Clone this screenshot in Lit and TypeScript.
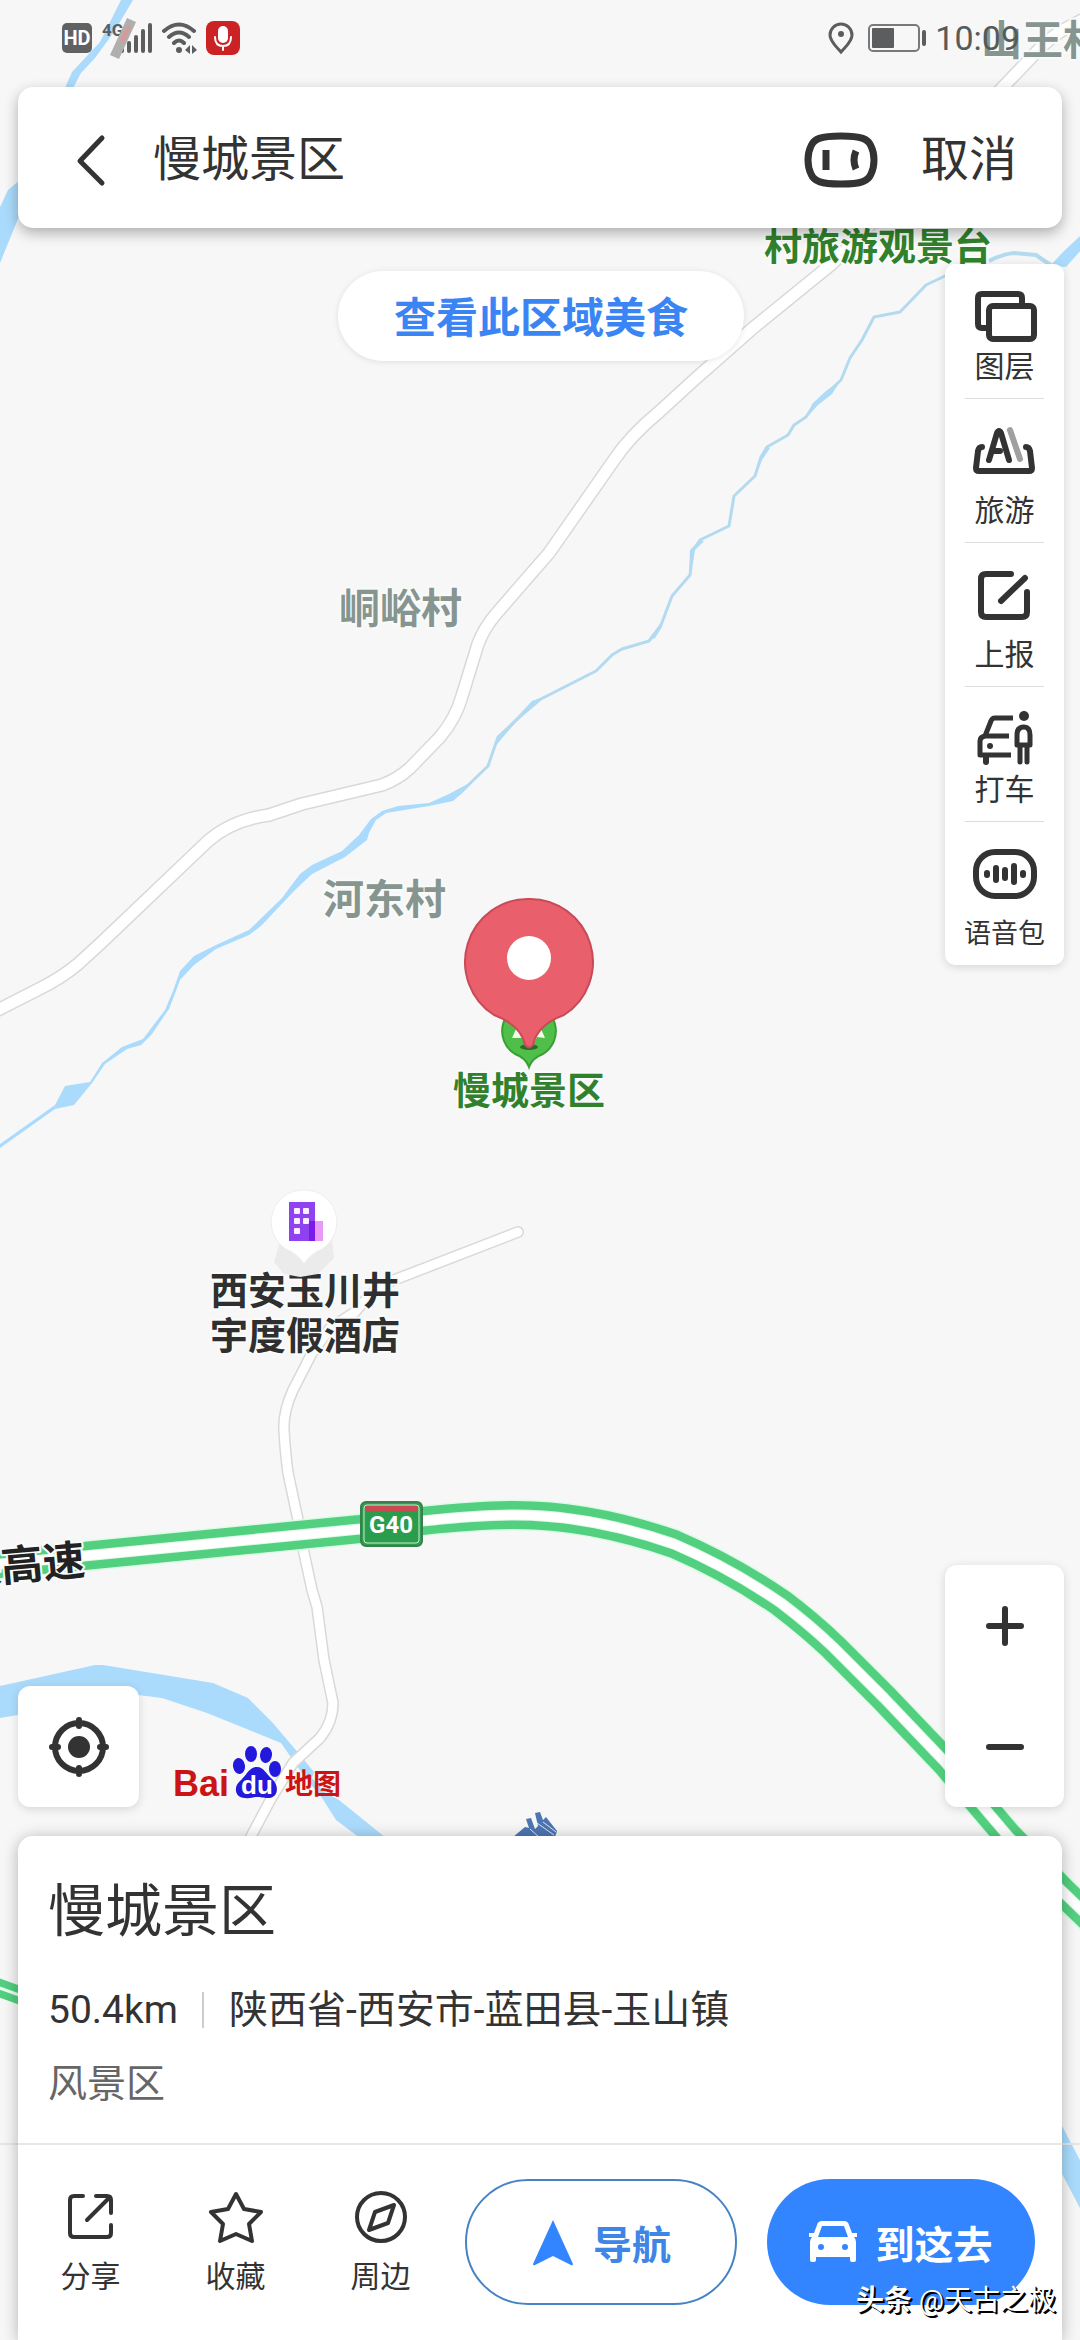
import { LitElement, html, css, svg } from "lit";
import { customElement, state } from "lit/decorators.js";
import { classMap } from "lit/directives/class-map.js";

const roadMain =
  "M-10 1014 L37 990 Q60 979 78 964 L102 942 L208 841 Q232 820 269 815 L302 804 L382 785 Q398 779 410 768 L440 737 Q456 718 462 696 L478 644 Q484 628 496 614 L549 553 L614 460 Q630 436 659 412 L694 380 L753 328 L833 263 L1003 87 L1029 60 Q1050 36 1067 28 L1090 16";
const roadSide =
  "M518 1232 L394 1280 Q376 1286 355 1312 L330 1328 L312 1353 L293 1390 Q283 1412 284 1430 Q285 1450 288 1473 L298 1520 L304 1553 L312 1590 L317 1607 L324 1660 L333 1703 Q333 1722 320 1738 L293 1763 L272 1797 L248 1842";
const highway =
  "M-10 1565 L84 1556 L360 1529 L422 1521 Q480 1515 515 1515 Q590 1515 674 1544 Q730 1568 781 1603 Q810 1625 833 1647 L884 1698 L945 1762 L1008 1836 L1062 1891 L1090 1918";

const map = svg`
  <g fill="#abdbfc">
    <path d="M121 0 L108 26 L100 42 L72 72 L65 88 L73 88 L81 73 L95 58 L114 32 L133 0Z"/>
    <path d="M20 180 L8 190 L0 207 L0 263 L20 214Z"/>
    <path d="M1082 234 L1063 252 L1050 266 L1066 267 L1082 249Z"/>
    <path d="M475 780 L449 794 L429 803 L398 806 L382 811 L371 819 L359 835 L342 851 L312 865 L300 874 L282 898 L249 930 L216 945 L194 956 L180 971 L173 991 L165 1010 L143 1039 L122 1047 L102 1063 L90 1082 L65 1086 L55 1105 L0 1144 L0 1148 L55 1109 L74 1105 L92 1083 L105 1064 L127 1049 L141 1045 L152 1034 L169 1009 L176 991 L180 980 L194 965 L216 949 L249 935 L261 926 L294 891 L312 874 L345 857 L367 840 L369 833 L376 820 L386 813 L429 806 L453 801 L461 794Z"/>
    <path d="M0 1686 L95 1665 L103 1665 L213 1683 L248 1698 L272 1722 L300 1755 L314 1772 L312 1778 L324 1792 L339 1800 L386 1838 L360 1838 L336 1820 L322 1798 L304 1776 L281 1743 L207 1713 L162 1698 L138 1695 L0 1718Z"/>
    <path d="M1060 2122 L1082 2164 L1082 2212 L1060 2170Z"/>
    <path d="M841 380 L826 391 L812 404 L808 416 L818 405 L832 394Z"/>
    <path d="M766 447 L760 457 L758 470 L762 460 L770 448Z"/>
    <path d="M700 540 L690 550 L689 574 L693 562 L695 550 L704 541Z"/>
    <path d="M661 625 L648 641 L655 638 L662 627Z"/>
    <path d="M546 696 L532 701 L516 718 L497 737 L494 748 L503 737 L518 720 L536 705Z"/>
  </g>
  <g fill="none" stroke="#b4daf0" stroke-linejoin="round">
    <path stroke-width="3" d="M947 275 L926 285 L900 312 L874 317 L862 340 L850 358 L841 380 L814 405 L806 417 L794 425 L788 435 L767 447 L761 457 L755 476 L734 496 L729 526 L700 540 L693 550 L690 575 L672 596 L661 625 L649 641 L622 649 L612 655 L596 671 L537 701 L498 737 L488 766 L459 794"/>
    <path stroke-width="4" d="M989 261 Q1002 254 1014 253 L1036 255 L1052 266"/>
  </g>
  <g fill="none" stroke-linejoin="round" stroke-linecap="round">
    <path d=${roadMain} stroke="#d9d9d9" stroke-width="14"/>
    <path d=${roadMain} stroke="#fff" stroke-width="11"/>
    <path d=${roadSide} stroke="#d9d9d9" stroke-width="12"/>
    <path d=${roadSide} stroke="#fff" stroke-width="9"/>
    <path d=${highway} stroke="#dcfbe6" stroke-width="31"/>
    <path d=${highway} stroke="#52d07f" stroke-width="28"/>
    <path d=${highway} stroke="#dcfbe6" stroke-width="11"/>
    <path d=${highway} stroke="#fff" stroke-width="9"/>
    <path d="M-6 1986 L30 1999" stroke="#52d07f" stroke-width="18"/>
    <path d="M-6 1986 L30 1999" stroke="#eafff0" stroke-width="3"/>
    <path d="M0 2144 H1080" stroke="#e4e6e7" stroke-width="2"/>
  </g>
  <g fill="#4d76b2">
    <path d="M513 1837 L525 1827 L529 1828 L526 1819 L531 1818 L535 1829 L538 1826 L535 1813 L540 1812 L543 1820 L546 1817 L557 1831 L555 1837Z"/>
    <path d="M537 1823 L554 1835 M530 1829 L539 1837 M543 1822 L556 1832" stroke="#dfe8f4" stroke-width="1"/>
  </g>

  <g class="label village">
    <text x="981" y="55">山王村</text>
    <text x="339" y="623">峒峪村</text>
    <text x="323" y="914">河东村</text>
  </g>
  <g class="label scenic">
    <text x="764" y="260">村旅游观景台</text>
    <text x="529" y="1104" text-anchor="middle">慢城景区</text>
  </g>
  <g class="label hotel" text-anchor="middle">
    <text x="305" y="1304">西安玉川井</text>
    <text x="305" y="1349">宇度假酒店</text>
  </g>
  <text class="label highway" x="-40" y="1582" transform="rotate(-5 0 1578)">陕高速</text>

  <path fill="#ebebeb" d="M280 1242 L274 1262 L284 1274 L300 1277 L318 1274 L334 1258 L332 1240Z"/>
  <path fill="#fff" stroke="#eeeeee" d="M304 1190 A32 32 0 0 1 322 1249 Q310 1254 304 1264 Q298 1254 286 1249 A32 32 0 0 1 304 1190Z"/>
  <rect x="314" y="1221" width="9" height="20" fill="#e79af7"/>
  <rect x="289" y="1202" width="26" height="39" fill="#8f42ef"/>
  <rect x="309" y="1221" width="6" height="20" fill="#7a1ce8"/>
  <g fill="#fdf0ff">
    <rect x="294" y="1208" width="6" height="6" rx="1"/><rect x="303" y="1208" width="6" height="6" rx="1"/>
    <rect x="294" y="1218" width="6" height="6" rx="1"/><rect x="303" y="1218" width="6" height="6" rx="1"/>
    <rect x="294" y="1228" width="6" height="6" rx="1"/>
  </g>

  <path fill="#50bf49" stroke="#36a033" stroke-width="2" d="M529 1004 A27 27 0 0 1 543 1054 Q532 1058 529 1067 Q526 1058 515 1054 A27 27 0 0 1 529 1004Z"/>
  <path fill="#f1fbe9" d="M516 1029 L512 1038 H522 L524 1043 H534 L537 1037 L545 1038 L541 1029Z"/>
  <ellipse cx="529" cy="1047" rx="9" ry="3" fill="#2d6a2b"/>
  <path fill="#ea5f6c" stroke="#c94a57" stroke-width="2" d="M529 899 A63 63 0 0 1 564 1015 Q537 1025 533 1045 Q529 1050 525 1045 Q521 1025 494 1015 A63 63 0 0 1 529 899Z"/>
  <circle cx="529" cy="958" r="22" fill="#fff"/>

  <rect x="361" y="1502" width="61" height="44" rx="5" fill="#2f9e4f" stroke="#3a7f50" stroke-width="2"/>
  <rect x="364" y="1505" width="55" height="38" rx="3" fill="#2a9d4c" stroke="#c9f0d2" stroke-width="1"/>
  <rect x="365" y="1506" width="53" height="5" fill="#c94a50"/>
  <text class="shield" x="391" y="1533" text-anchor="middle">G40</text>
`;

const toolIcons = {
  layers: svg`<path stroke-width="6" d="M13 40 H9 Q5 40 5 36 V10 Q5 6 9 6 H45 Q49 6 49 10 V16"/><rect stroke-width="6" x="16" y="18" width="45" height="33" rx="4"/>`,
  travel: svg`<path stroke-width="6" d="M9 24 Q6 24 5 28 L3 45 Q3 48 6 48 H56 Q59 48 59 45 L57 28 Q56 24 53 24"/><path stroke-width="6" d="M16 37 L24 10 Q26 6 28 10 L36 37 M20 28 H27"/><path stroke="#a0a0a0" stroke-width="6" d="M37 7 L47 36"/>`,
  report: svg`<path stroke-width="6" d="M38 7 H13 Q8 7 8 12 V45 Q8 50 13 50 H49 Q54 50 54 45 V25 M28 34 L52 11"/>`,
  taxi: svg`<path stroke-linecap="butt" d="M40 7 H22 Q19 7 18 10 L12 25 Q7 26 7 30 V44 H38 M12 25 H36"/><path stroke-width="6" d="M13 46 V51"/><circle cx="17" cy="35" r="3" fill="#333" stroke="none"/><circle cx="51" cy="5" r="5" fill="#333" stroke="none"/><path d="M44 34 V24 Q44 16 51 16 Q57 16 57 24 V34 M47 34 V51 M54 34 V51 M45 34 H56"/>`,
  voice: svg`<rect stroke-width="6" x="3" y="6" width="58" height="44" rx="19"/><path stroke-width="6" d="M14 27 V29 M23 22 V34 M32 24 V32 M41 20 V36 M50 27 V29"/>`,
};

type ToolKey = keyof typeof toolIcons;
const tools: { icon: ToolKey; label: string; tight?: boolean; small?: boolean }[] = [
  { icon: "layers", label: "图层", tight: true },
  { icon: "travel", label: "旅游" },
  { icon: "report", label: "上报" },
  { icon: "taxi", label: "打车", tight: true },
  { icon: "voice", label: "语音包", small: true },
];

const actions = [
  {
    label: "分享",
    icon: svg`<path d="M20 7 H11 Q7 7 7 11 V44 Q7 48 11 48 H44 Q48 48 48 44 V36 M33 7 H44 Q48 7 48 11 V24 M46 9 L24 31"/>`,
  },
  {
    label: "收藏",
    icon: svg`<path d="M28 5 L36 20 L53 23 L41 35 L44 52 L28 45 L12 52 L15 35 L3 23 L20 20Z"/>`,
  },
  {
    label: "周边",
    icon: svg`<circle cx="28" cy="28" r="24"/><path d="M41 16 L35 34 L16 41 L22 23Z"/>`,
  },
];

@customElement("app-root")
export class AppRoot extends LitElement {
  @state() private query = "慢城景区";

  static styles = css`
    :host {
      display: block;
      font-family: Roboto, "Noto Sans CJK SC", sans-serif;
      color: #333;
    }
    * {
      box-sizing: border-box;
    }
    svg {
      display: block;
      flex: none;
    }
    button,
    input {
      font: inherit;
      color: inherit;
      border: 0;
      padding: 0;
      margin: 0;
      background: none;
    }
    button {
      cursor: pointer;
    }
    .screen {
      position: relative;
      display: flex;
      flex-direction: column;
      min-height: 100vh;
      overflow: hidden;
      background: #f7f7f7;
    }
    .map {
      position: absolute;
      inset: 0;
      width: 100%;
      height: 100%;
    }
    .label {
      font-family: "Noto Sans CJK SC", sans-serif;
      font-weight: 700;
      stroke: #f9fbfa;
      stroke-width: 4px;
      stroke-linejoin: round;
      paint-order: stroke;
    }
    .village {
      font-size: 41px;
      fill: #86958f;
    }
    .scenic {
      font-size: 38px;
      fill: #31812c;
    }
    .hotel {
      font-size: 38px;
      fill: #2f2f2f;
    }
    .highway {
      font-size: 42px;
      fill: #222;
    }
    .shield {
      font-size: 24px;
      font-weight: 700;
      fill: #fff;
    }
    .status {
      position: relative;
      display: flex;
      align-items: center;
      gap: 9px;
      height: 87px;
      padding: 0 60px 11px 62px;
      color: #5b5d5e;
    }
    .status .push {
      margin-left: auto;
    }
    .status .battery {
      margin-left: 5px;
    }
    .time {
      font-size: 34px;
      line-height: 40px;
      color: #555a5b;
    }
    .hd {
      font: 700 20px Roboto, sans-serif;
      fill: #fff;
    }
    .net {
      font: 700 17px Roboto, sans-serif;
      fill: #5b5d5e;
    }
    .search {
      position: relative;
      display: flex;
      align-items: center;
      height: 141px;
      margin: 0 18px;
      padding: 4px 45px 0 42px;
      background: #fff;
      border-radius: 15px;
      box-shadow: 0 5px 14px rgba(0, 0, 0, 0.3);
      font-size: 48px;
    }
    .field {
      flex: 1;
      min-width: 0;
      margin: 0 33px;
      outline: none;
      line-height: 64px;
    }
    .cancel {
      margin-left: 43px;
      line-height: 64px;
    }
    .stage {
      position: relative;
      flex: 1;
      display: grid;
      grid-template-columns: 121px 1fr 119px;
      grid-template-rows: auto 1fr auto;
      padding: 36px 16px 29px 18px;
    }
    .pill {
      grid-area: 1 / 1 / 2 / 4;
      place-self: start center;
      height: 90px;
      margin-top: 7px;
      padding: 0 56px 4px;
      border-radius: 45px;
      background: #fff;
      color: #3a85f3;
      font-size: 42px;
      font-weight: 700;
      box-shadow: 0 1px 6px rgba(0, 0, 0, 0.1);
    }
    .tools {
      grid-area: 1 / 3 / 3 / 4;
      align-self: start;
      list-style: none;
      margin: 0;
      padding: 0 20px;
      border-radius: 10px;
      background: #fff;
      box-shadow: 0 2px 10px rgba(0, 0, 0, 0.14);
    }
    .tool + .tool {
      border-top: 1px solid #dcdcdc;
    }
    .tool button {
      display: flex;
      flex-direction: column;
      align-items: center;
      gap: 16px;
      width: 100%;
      padding: 24px 0 15px;
      font-size: 30px;
      line-height: 32px;
      white-space: nowrap;
    }
    .tool.tight button {
      gap: 7px;
    }
    .tool.small button {
      font-size: 27px;
    }
    .locate {
      grid-area: 3 / 1 / 4 / 2;
      align-self: end;
      display: grid;
      place-items: center;
      height: 121px;
      border-radius: 12px;
      background: #fff;
      box-shadow: 0 2px 10px rgba(0, 0, 0, 0.14);
    }
    .brand {
      grid-area: 3 / 2 / 4 / 3;
      align-self: end;
      display: flex;
      align-items: flex-end;
      gap: 3px;
      margin-left: 34px;
      padding-bottom: 8px;
      color: #cc1414;
      font-weight: 700;
    }
    .bai {
      font-family: "Liberation Sans", sans-serif;
      font-size: 36px;
      line-height: 30px;
    }
    .ditu {
      font-size: 28px;
      line-height: 28px;
    }
    .du {
      font: 700 26px "Liberation Sans", sans-serif;
      fill: #fff;
    }
    .zoom {
      grid-area: 3 / 3 / 4 / 4;
      display: flex;
      flex-direction: column;
      border-radius: 12px;
      background: #fff;
      box-shadow: 0 2px 10px rgba(0, 0, 0, 0.14);
    }
    .zoom button {
      display: grid;
      place-items: center;
      height: 121px;
    }
    .place {
      position: relative;
      margin: 0 18px;
      background: #fff;
      border-radius: 15px 15px 0 0;
      box-shadow: 0 2px 16px rgba(0, 0, 0, 0.28);
    }
    .info {
      display: flex;
      flex-direction: column;
      padding: 48px 30px 36px;
      border-bottom: 2px solid #e8e8e8;
      font-size: 39px;
      line-height: 46px;
    }
    .title {
      margin: 0 0 47px;
      font-size: 57px;
      font-weight: 400;
      line-height: 56px;
    }
    .meta {
      display: flex;
      align-items: center;
      margin-bottom: 28px;
    }
    .address {
      margin-left: 24px;
      padding-left: 25px;
      border-left: 2px solid #ccc;
      line-height: 36px;
    }
    .kind {
      color: #666;
    }
    .bar {
      display: flex;
      align-items: center;
      padding: 34px 27px 35px 0;
    }
    .action {
      display: flex;
      flex-direction: column;
      align-items: center;
      gap: 14px;
      width: 145px;
      font-size: 30px;
      line-height: 36px;
    }
    .cta {
      flex: 1;
      display: flex;
      align-items: center;
      justify-content: center;
      gap: 18px;
      height: 126px;
      border-radius: 63px;
      font-size: 39px;
      font-weight: 700;
      white-space: nowrap;
    }
    .nav {
      margin: 0 30px 0 12px;
      border: 2px solid #4583c4;
      color: #3f85e6;
    }
    .go {
      background: #3385ff;
      color: #fff;
    }
    .watermark {
      position: absolute;
      right: 24px;
      bottom: 21px;
      font-size: 28px;
      line-height: 36px;
      color: #fff;
      text-shadow: 2px 2px 0 #000, 1px 1px 0 #000;
    }
  `;

  private onInput(e: Event) {
    this.query = (e.target as HTMLInputElement).value;
  }

  private renderStatus() {
    return html`
      <div class="status">
        <svg width="30" height="30" viewBox="0 0 30 30">
          <rect width="30" height="30" rx="5" fill="#5f6163" />
          <text class="hd" x="15" y="22" text-anchor="middle">HD</text>
        </svg>
        <svg width="51" height="42" viewBox="0 0 51 42">
          <text class="net" x="1" y="19">4G</text>
          <g fill="#5b5d5e">
            <rect x="19" y="30" width="4" height="6" rx="2" /><rect x="26" y="24" width="4" height="12" rx="2" />
            <rect x="33" y="18" width="4" height="18" rx="2" /><rect x="40" y="12" width="4" height="24" rx="2" />
            <rect x="47" y="6" width="4" height="30" rx="2" />
          </g>
          <path d="M26 1 L35 5 L18 42 L9 38Z" fill="#b0aeae" />
          <path d="M26 9 L30 10 L22 27 L19 24Z" fill="#d69a98" />
        </svg>
        <svg width="36" height="32" viewBox="0 0 36 32" fill="none" stroke="#5b5d5e" stroke-width="4" stroke-linecap="round">
          <path d="M3 9 Q18 -4 33 9 M8 15 Q18 6 28 15 M13 21 Q18 16 23 21" />
          <circle cx="18" cy="28" r="3" fill="#5b5d5e" stroke="none" />
          <path d="M29 23 V32 L24 28Z M31 23 V32 L36 28Z" fill="#5b5d5e" stroke="none" />
        </svg>
        <svg width="34" height="34" viewBox="0 0 34 34">
          <rect width="34" height="34" rx="8" fill="#cb2226" />
          <rect x="12" y="5" width="10" height="17" rx="5" fill="#fff" />
          <path d="M9 16 Q9 25 17 25 Q25 25 25 16 M17 25 V29" fill="none" stroke="#fff" stroke-width="2" stroke-linecap="round" />
        </svg>
        <svg class="push" width="26" height="32" viewBox="0 0 26 32">
          <path d="M13 2 A11 11 0 0 1 24 13 C24 20 17 25 13 30 C9 25 2 20 2 13 A11 11 0 0 1 13 2Z" fill="none" stroke="#5b5d5e" stroke-width="3" />
          <circle cx="13" cy="12" r="3" fill="#5b5d5e" />
        </svg>
        <svg class="battery" width="58" height="28" viewBox="0 0 58 28">
          <rect x="1" y="1" width="50" height="26" rx="4" fill="none" stroke="#77797a" stroke-width="2" />
          <rect x="4" y="4" width="22" height="20" rx="1" fill="#5b5d5e" />
          <rect x="54" y="6" width="4" height="16" rx="2" fill="#5b5d5e" />
        </svg>
        <span class="time">10:09</span>
      </div>
    `;
  }

  render() {
    return html`
      <main class="screen">
        <svg class="map" viewBox="0 0 1080 2340" preserveAspectRatio="xMidYMid slice">${map}</svg>

        ${this.renderStatus()}

        <header class="search">
          <button aria-label="返回">
            <svg width="60" height="60" viewBox="0 0 60 60" fill="none" stroke="#333" stroke-width="5" stroke-linecap="round" stroke-linejoin="round">
              <path d="M42 8 L20 31 L42 53" />
            </svg>
          </button>
          <input class="field" type="text" aria-label="搜索" .value=${this.query} @input=${this.onInput} />
          <button aria-label="语音助手">
            <svg width="74" height="56" viewBox="0 0 74 56" fill="none" stroke="#333">
              <path stroke-width="7" d="M37 4 C58 4 64 7 67 14 Q70 20 70 28 Q70 36 67 42 C64 49 58 52 37 52 C16 52 10 49 7 42 Q4 36 4 28 Q4 20 7 14 C10 7 16 4 37 4Z" />
              <path stroke-width="7" d="M22 18 V38" />
              <path stroke-width="7" d="M52 19 Q48 28 52 37" />
            </svg>
          </button>
          <button class="cancel">取消</button>
        </header>

        <section class="stage">
          <button class="pill">查看此区域美食</button>
          <ul class="tools">
            ${tools.map(
              (t) => html`
                <li class=${classMap({ tool: true, tight: !!t.tight, small: !!t.small })}>
                  <button>
                    <svg width="64" height="56" viewBox="0 0 64 56" overflow="visible" fill="none" stroke="#333" stroke-width="5" stroke-linecap="round" stroke-linejoin="round">
                      ${toolIcons[t.icon]}
                    </svg>
                    ${t.label}
                  </button>
                </li>
              `
            )}
          </ul>
          <button class="locate" aria-label="定位">
            <svg width="62" height="62" viewBox="0 0 62 62" fill="none" stroke="#333" stroke-width="6" stroke-linecap="round">
              <circle cx="31" cy="31" r="24" />
              <circle cx="31" cy="31" r="11" fill="#333" stroke="none" />
              <path d="M31 4 V10 M31 52 V58 M4 31 H10 M52 31 H58" />
            </svg>
          </button>
          <div class="brand">
            <span class="bai">Bai</span>
            <svg width="50" height="54" viewBox="0 0 50 54">
              <g fill="#2319dc">
                <ellipse cx="19" cy="9" rx="6" ry="8" /><ellipse cx="34" cy="10" rx="6" ry="8" transform="rotate(8 34 10)" />
                <ellipse cx="7" cy="21" rx="6" ry="8" transform="rotate(-8 7 21)" /><ellipse cx="43" cy="24" rx="6" ry="8" />
                <path d="M25 22 C32 22 34 29 40 34 C48 41 46 53 36 53 C31 53 29 52 25 52 C21 52 18 54 13 53 C3 53 1 42 8 36 C15 30 17 22 25 22Z" />
              </g>
              <text class="du" x="25" y="49" text-anchor="middle">du</text>
            </svg>
            <span class="ditu">地图</span>
          </div>
          <div class="zoom">
            <button aria-label="放大">
              <svg width="40" height="40" viewBox="0 0 40 40" stroke="#333" stroke-width="6" stroke-linecap="round"><path d="M20 3 V37 M4 20 H36" /></svg>
            </button>
            <button aria-label="缩小">
              <svg width="40" height="40" viewBox="0 0 40 40" stroke="#333" stroke-width="6" stroke-linecap="round"><path d="M4 20 H36" /></svg>
            </button>
          </div>
        </section>

        <section class="place">
          <div class="info">
            <h1 class="title">慢城景区</h1>
            <div class="meta"><span>50.4km</span><span class="address">陕西省-西安市-蓝田县-玉山镇</span></div>
            <div class="kind">风景区</div>
          </div>
          <div class="bar">
            ${actions.map(
              (a) => html`
                <button class="action">
                  <svg width="56" height="56" viewBox="0 0 56 56" fill="none" stroke="#333" stroke-width="4" stroke-linecap="round" stroke-linejoin="round">${a.icon}</svg>
                  ${a.label}
                </button>
              `
            )}
            <button class="cta nav">
              <svg width="44" height="50" viewBox="0 0 44 50"><path d="M22 3 L42 47 Q42 49 40 48 L22 39 L4 48 Q2 49 2 47Z" fill="#3385ff" /></svg>
              导航
            </button>
            <button class="cta go">
              <svg width="48" height="42" viewBox="0 0 48 42" fill="#fff">
                <path fill-rule="evenodd" d="M13 0 H35 Q39 0 40 4 L43 12 H48 V16 H45 Q47 18 47 21 V39 Q47 41 45 41 H43 Q41 41 41 39 V36 H7 V39 Q7 41 5 41 H3 Q1 41 1 39 V21 Q1 18 3 16 H0 V12 H5 L8 4 Q9 0 13 0Z M13 5 L9 16 H39 L35 5Z M12 23 A3 3 0 1 0 12 29 A3 3 0 1 0 12 23Z M36 23 A3 3 0 1 0 36 29 A3 3 0 1 0 36 23Z" />
              </svg>
              到这去
            </button>
          </div>
        </section>
        <div class="watermark"><b>头条</b> @天古之极</div>
      </main>
    `;
  }
}
